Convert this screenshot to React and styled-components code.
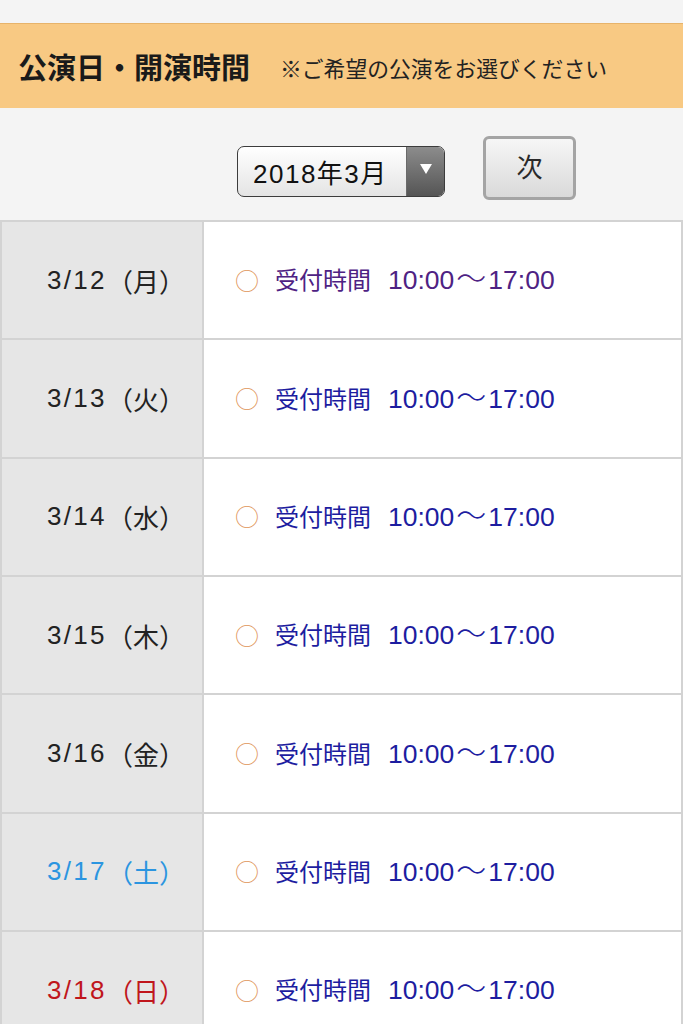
import styled, { createGlobalStyle } from "styled-components";

const rows = [
  { md: "3/12", wd: "月", day: "weekday", visited: true },
  { md: "3/13", wd: "火", day: "weekday" },
  { md: "3/14", wd: "水", day: "weekday" },
  { md: "3/15", wd: "木", day: "weekday" },
  { md: "3/16", wd: "金", day: "weekday" },
  { md: "3/17", wd: "土", day: "sat" },
  { md: "3/18", wd: "日", day: "sun" },
];

const dayColors = {
  weekday: "#222222",
  sat: "#2b95e0",
  sun: "#c0161c",
};

const App = () => {
  return (
    <>
      <GlobalStyle />
      <Page>
        <TopStrip />
        <Header>
          <Title>公演日・開演時間</Title>
          <Note>※ご希望の公演をお選びください</Note>
        </Header>
        <Controls>
          <MonthSelect>
            <MonthLabel>2018年3月</MonthLabel>
            <ArrowBox>
              <Arrow />
            </ArrowBox>
          </MonthSelect>
          <NextButton>次</NextButton>
        </Controls>
        <Table>
          {rows.map((r) => (
            <Row key={r.md}>
              <DateCell $color={dayColors[r.day]}>
                <DateNum>{r.md}</DateNum>（{r.wd}）
              </DateCell>
              <TimeCell>
                <Mark>○</Mark>
                <TimeLink $visited={r.visited}>
                  受付時間<Num $first>10:00</Num>
                  <Wave>〜</Wave>
                  <Num>17:00</Num>
                </TimeLink>
              </TimeCell>
            </Row>
          ))}
        </Table>
      </Page>
    </>
  );
};

export default App;

const GlobalStyle = createGlobalStyle`
  body {
    margin: 0;
    background: #ffffff;
    font-family: "Noto Sans CJK JP", "Noto Sans", sans-serif;
  }
`;

const Page = styled.div`
  width: 683px;
  height: 1024px;
  overflow: hidden;
  background: #f4f4f4;
`;

// 上の余白
const TopStrip = styled.div`
  height: 23px;
  background: #f4f4f4;
`;

// オレンジの見出し
const Header = styled.div`
  display: flex;
  align-items: center;
  height: 84px;
  padding: 0 0 0 18px;
  border-top: 1px solid #e7b36a;
  background: #f8c983;
`;

const Title = styled.h1`
  margin: 0;
  font-size: 29px;
  font-weight: 700;
  color: #1a1a1a;
`;

const Note = styled.span`
  margin-left: 30px;
  font-size: 21.8px;
  color: #222;
  padding-top: 3px;
`;

// 月の選択・次ボタン
const Controls = styled.div`
  display: flex;
  align-items: center;
  gap: 38px;
  height: 112px;
  padding: 8px 0 0 237px;
  box-sizing: border-box;
  background: #f4f4f4;
`;

const MonthSelect = styled.div`
  display: flex;
  width: 208px;
  height: 51px;
  box-sizing: border-box;
  border: 1px solid #3c3c3c;
  border-radius: 7px;
  overflow: hidden;
  background: linear-gradient(#ffffff, #e4e4e4);
  margin-top: 6px;
`;

const MonthLabel = styled.div`
  flex: 1;
  display: flex;
  align-items: center;
  padding-left: 15px;
  font-family: "Liberation Sans", "Noto Sans CJK JP", sans-serif;
  font-size: 26px;
  letter-spacing: 1.5px;
  color: #111;
`;

const ArrowBox = styled.div`
  display: flex;
  align-items: center;
  justify-content: center;
  width: 37px;
  background: linear-gradient(#8c8c8c, #555555);
  border-left: 1px solid #6a6a6a;
`;

const Arrow = styled.div`
  width: 0;
  height: 0;
  border-left: 6px solid transparent;
  border-right: 6px solid transparent;
  border-top: 10px solid #ffffff;
  margin-top: -4px;
`;

const NextButton = styled.button`
  width: 93px;
  height: 64px;
  box-sizing: border-box;
  border: 3px solid #a4a4a4;
  border-radius: 6px;
  background: linear-gradient(#f6f6f6, #d9d9d9);
  font-family: inherit;
  font-size: 26px;
  color: #2a2a2a;
  padding: 0 0 6px;
`;

// 日程表
const Table = styled.div`
  border-top: 2px solid #d3d3d3;
  border-left: 2px solid #d3d3d3;
  border-right: 2px solid #d3d3d3;
  background: #ffffff;
`;

const Row = styled.div`
  display: grid;
  grid-template-columns: 202px 1fr;
  height: 116.33px;
  border-bottom: 2px solid #d3d3d3;
`;

const DateCell = styled.div`
  display: flex;
  align-items: center;
  justify-content: center;
  padding-left: 28px;
  background: #e6e6e6;
  border-right: 2px solid #d3d3d3;
  font-size: 26px;
  color: ${(p) => p.$color};
`;

const DateNum = styled.span`
  font-family: "Liberation Sans", sans-serif;
  font-size: 26px;
  letter-spacing: 2.3px;
`;

const TimeCell = styled.div`
  display: flex;
  align-items: center;
  padding-left: 31px;
  font-size: 24px;
  line-height: 1;
`;

const Mark = styled.span`
  color: #e0955a;
  margin-right: 16px;
  font-size: 24px;
  font-weight: 300;
  margin-top: -1px;
`;

const TimeLink = styled.a`
  display: flex;
  align-items: baseline;
  margin-bottom: 5px;
  color: ${(p) => (p.$visited ? "#4e2283" : "#1d1da0")};
  text-decoration: none;
`;

const Num = styled.span`
  font-family: "Liberation Sans", sans-serif;
  font-size: 26.5px;
  margin-left: ${(p) => (p.$first ? "17px" : "0")};
`;

const Wave = styled.span`
  font-size: 30px;
  font-weight: 300;
  margin: 0 2px;
`;
